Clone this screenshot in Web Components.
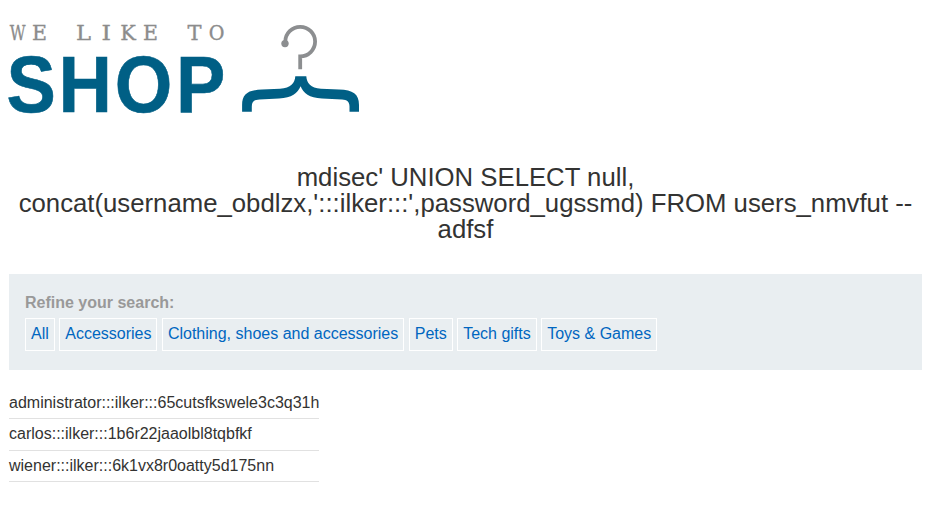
<!DOCTYPE html>
<html lang="en"><head><meta charset="utf-8"><title>We Like To Shop</title>
<style>
body{margin:0;background:#fff;color:#333332;font-family:"Liberation Sans",Arial,sans-serif;font-size:16px}
</style></head><body>
<shop-page>
<shop-logo></shop-logo>
<page-title>mdisec' UNION SELECT null, concat(username_obdlzx,':::ilker:::',password_ugssmd) FROM users_nmvfut -- adfsf</page-title>
<search-filters label="Refine your search:">
<filter-link>All</filter-link><filter-link>Accessories</filter-link><filter-link>Clothing, shoes and accessories</filter-link><filter-link>Pets</filter-link><filter-link>Tech gifts</filter-link><filter-link>Toys &amp; Games</filter-link>
</search-filters>
<result-list><result-row>administrator:::ilker:::65cutsfkswele3c3q31h</result-row><result-row>carlos:::ilker:::1b6r22jaaolbl8tqbfkf</result-row><result-row>wiener:::ilker:::6k1vx8r0oatty5d175nn</result-row></result-list>
</shop-page>
<script>
const define=(name,html)=>customElements.define(name,class extends HTMLElement{
  constructor(){super();this.attachShadow({mode:'open'}).innerHTML=html;
    const label=this.shadowRoot.querySelector('[data-label]');
    if(label)label.textContent=this.getAttribute('label');}
});
define('shop-page',`<style>:host{display:flex;flex-direction:column;box-sizing:border-box;height:511px;padding:0 8px 0 9px}</style><slot></slot>`);
define('shop-logo',`<style>:host{display:block;height:164px}svg{display:block;margin-left:-9px}</style>
<svg width="370" height="140" viewBox="0 0 370 140">
<text y="40.4" font-family="DejaVu Serif" font-size="20.2" fill="#8c8c8c" stroke="#8c8c8c" stroke-width=".35"><tspan x="9.7" textLength="15.8" lengthAdjust="spacingAndGlyphs">W</tspan><tspan x="32" textLength="15" lengthAdjust="spacingAndGlyphs">E</tspan> <tspan x="76" textLength="15" lengthAdjust="spacingAndGlyphs">L</tspan><tspan x="101.5" textLength="9.5" lengthAdjust="spacingAndGlyphs">I</tspan><tspan x="120.3" textLength="15.6" lengthAdjust="spacingAndGlyphs">K</tspan><tspan x="143" textLength="15" lengthAdjust="spacingAndGlyphs">E</tspan> <tspan x="187.5" textLength="14" lengthAdjust="spacingAndGlyphs">T</tspan><tspan x="208.7" textLength="15.7" lengthAdjust="spacingAndGlyphs">O</tspan></text>
<text transform="scale(.92 1)" x="7.2 63.6 124.8 191.2" y="111.7" font-family="Liberation Sans" font-weight="700" font-size="80.5" fill="#005f85" stroke="#005f85" stroke-width=".6">SHOP</text>
<path d="M285.3 43V41.6A14.9 14.8 0 1 1 300.2 56.4V69.3" fill="none" stroke="#8c8e90" stroke-width="3.8"/><circle cx="285" cy="43.6" r="3.7" fill="#8c8e90"/>
<path d="M295.3 76.3H306.3C306.8 83.5 310.5 87.8 321 88.8L339 89.6C353 90 359 94 359 105V111.8H349.5V106.5C349.5 101.5 347 99.6 342 99.4L322 98.5C309 98 303.5 93 300.6 86.3C297.5 93 292 98 279 98.5L259.5 99.4C254 99.6 251.8 101.5 251.8 106.5V111.8H242.1V105C242.1 94 248 90 262 89.6L280 88.8C291 87.8 294.8 83.5 295.3 76.3Z" fill="#005f85"/>
</svg>`);
define('page-title',`<style>:host{display:block;height:110px;font-size:25.74px;line-height:26px;text-align:center}</style><slot></slot>`);
define('search-filters',`<style>:host{display:flex;flex-direction:column;box-sizing:border-box;height:96px;padding:19px 16px;background:#e9eef1}label{font-weight:700;line-height:19px;color:#999;margin-bottom:6px}div{display:flex;gap:4.45px}</style><label data-label></label><div><slot></slot></div>`);
define('filter-link',`<style>:host{display:block;box-sizing:border-box;height:33px;padding:5px;border:1px solid #fff;color:#0066c0;line-height:20px;white-space:nowrap}</style><slot></slot>`);
define('result-list',`<style>:host{display:block;width:310px;margin-top:17px}</style><slot></slot>`);
define('result-row',`<style>:host{display:block;box-sizing:border-box;height:32px;line-height:31px;border-bottom:1px solid #e1e1e1;white-space:nowrap}:host(:nth-child(2)){line-height:29px}:host(:nth-child(3)){height:31px;line-height:30px}</style><slot></slot>`);
</script>
</body></html>
